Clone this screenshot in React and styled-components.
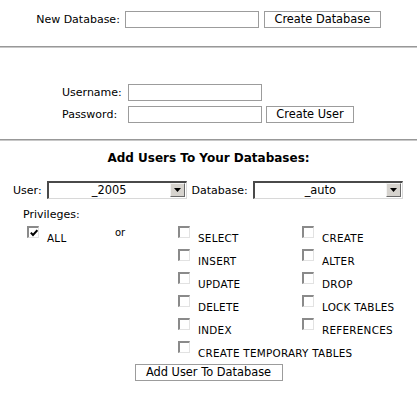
import React from "react";
import styled, { createGlobalStyle } from "styled-components";

const Global = createGlobalStyle`
  html, body { margin: 0; padding: 0; background: #fff; }
  body { font-family: "DejaVu Sans", Verdana, sans-serif; color: #000; }
`;

const Page = styled.div`
  width: 417px;
  display: flex;
  flex-direction: column;
`;

const Rule = styled.div`
  height: 0;
  border-top: 1px solid #989898;
  border-bottom: 1px solid #c8c8c8;
  margin: ${(p) => p.$m || "0"};
`;

const CenterRow = styled.div`
  display: flex;
  justify-content: center;
  align-items: center;
  gap: ${(p) => p.$gap || 5}px;
  padding-top: ${(p) => p.$pt || 0}px;
`;

const Label = styled.span`
  font-size: 11px;
  line-height: 17px;
  white-space: nowrap;
`;

const TextInput = styled.input`
  box-sizing: border-box;
  width: ${(p) => p.$w || 134}px;
  height: ${(p) => p.$h || 17}px;
  border: 1px solid #9c9c9c;
  background: #fff;
  margin: 0;
  padding: 0 2px;
  font: 11px "DejaVu Sans", sans-serif;
  outline: none;
`;

const Button = styled.button`
  box-sizing: border-box;
  height: 17px;
  width: ${(p) => p.$w}px;
  border: 1px solid #9c9c9c;
  background: #fff;
  margin: 0;
  padding: 0;
  font: 11.4px "DejaVu Sans", sans-serif;
  line-height: 15px;
  color: #000;
  white-space: nowrap;
`;

const UserGrid = styled.div`
  display: grid;
  grid-template-columns: 66px 134px 92px;
  row-gap: 5px;
  justify-content: center;
  align-items: center;
  padding-top: 36px;
  padding-right: 1px;
  & > button { margin-left: 4px; }
`;

const Heading = styled.h2`
  margin: 0;
  padding-top: 9px;
  text-align: center;
  font-size: 12px;
  line-height: 16px;
  font-weight: bold;
`;

const SelectRow = styled.div`
  display: flex;
  align-items: center;
  padding: 15px 0 0 13px;
  gap: 5px;
`;

const SelectBox = styled.div`
  box-sizing: border-box;
  width: ${(p) => p.$w}px;
  height: 18px;
  display: flex;
  align-items: stretch;
  background: #fff;
  border-top: 2px solid #4a4a4a;
  border-left: 2px solid #4a4a4a;
  border-right: 1px solid #d8d8d8;
  border-bottom: 1px solid #d8d8d8;
`;

const SelectValue = styled.span`
  flex: 1;
  text-align: center;
  font-size: 11.4px;
  line-height: 15px;
`;

const Arrow = styled.span`
  box-sizing: border-box;
  width: 15px;
  margin: 0 1px 1px 0;
  background: #d6d3ce;
  border-top: 1px solid #f4f4f4;
  border-left: 1px solid #f4f4f4;
  border-right: 1px solid #6a6a6a;
  border-bottom: 1px solid #6a6a6a;
  display: flex;
  align-items: center;
  justify-content: center;
`;

const PrivLabel = styled.div`
  font-size: 11px;
  line-height: 14px;
  padding: 9px 0 0 23px;
`;

const PrivGrid = styled.div`
  display: grid;
  grid-template-columns: 88px 63px 124px 1fr;
  grid-auto-rows: 23px;
  padding: 4px 0 0 27px;
`;

const Item = styled.label`
  display: flex;
  align-items: flex-start;
  grid-column: ${(p) => p.$col || "auto"};
`;

const Box = styled.span`
  box-sizing: border-box;
  width: 12px;
  height: 12px;
  flex: none;
  background: #fff;
  border-top: 2px solid #8a8a8a;
  border-left: 2px solid #8a8a8a;
  border-right: 1px solid #e2e2e2;
  border-bottom: 1px solid #e2e2e2;
  display: flex;
  align-items: center;
  justify-content: center;
`;

const ItemText = styled.span`
  font-size: 10.4px;
  letter-spacing: 0.25px;
  line-height: 12px;
  margin: 6px 0 0 8px;
  white-space: nowrap;
`;

const Or = styled.span`
  font-size: 10px;
  line-height: 12px;
  padding-top: 1px;
`;

const Empty = styled.span``;

const BottomRow = styled.div`
  display: flex;
  justify-content: center;
`;

function Check({ label, checked, col }) {
  return (
    <Item $col={col}>
      <Box>
        {checked && (
          <svg width="8" height="8" viewBox="0 0 8 8">
            <path d="M0.8 3.6 L3 6 L7.4 1.2" stroke="#000" strokeWidth="2" fill="none" />
          </svg>
        )}
      </Box>
      <ItemText>{label}</ItemText>
    </Item>
  );
}

function Select({ w, value }) {
  return (
    <SelectBox $w={w}>
      <SelectValue>{value}</SelectValue>
      <Arrow>
        <svg width="7" height="4" viewBox="0 0 7 4">
          <path d="M0 0 H7 L3.5 4 Z" fill="#000" />
        </svg>
      </Arrow>
    </SelectBox>
  );
}

export default function App() {
  return (
    <Page>
      <Global />
      <CenterRow $pt={11} $gap={5}>
        <Label>New Database:</Label>
        <TextInput $w={134} />
        <Button $w={117}>Create Database</Button>
      </CenterRow>
      <Rule $m="18px 0 0 0" />
      <UserGrid>
        <Label>Username:</Label>
        <TextInput $w={134} $h={17} />
        <span />
        <Label>Password:</Label>
        <TextInput $w={134} $h={17} />
        <Button $w={88}>Create User</Button>
      </UserGrid>
      <Rule $m="16px 0 0 0" />
      <Heading>Add Users To Your Databases:</Heading>
      <SelectRow>
        <Label>User:</Label>
        <Select w={140} value="_2005" />
        <Label>Database:</Label>
        <Select w={150} value="_auto" />
      </SelectRow>
      <PrivLabel>Privileges:</PrivLabel>
      <PrivGrid>
        <Check label="ALL" checked />
        <Or>or</Or>
        <Check label="SELECT" />
        <Check label="CREATE" />
        <Empty />
        <Empty />
        <Check label="INSERT" />
        <Check label="ALTER" />
        <Empty />
        <Empty />
        <Check label="UPDATE" />
        <Check label="DROP" />
        <Empty />
        <Empty />
        <Check label="DELETE" />
        <Check label="LOCK TABLES" />
        <Empty />
        <Empty />
        <Check label="INDEX" />
        <Check label="REFERENCES" />
        <Empty />
        <Empty />
        <Check label="CREATE TEMPORARY TABLES" col="3 / 5" />
      </PrivGrid>
      <BottomRow>
        <Button $w={148}>Add User To Database</Button>
      </BottomRow>
    </Page>
  );
}
